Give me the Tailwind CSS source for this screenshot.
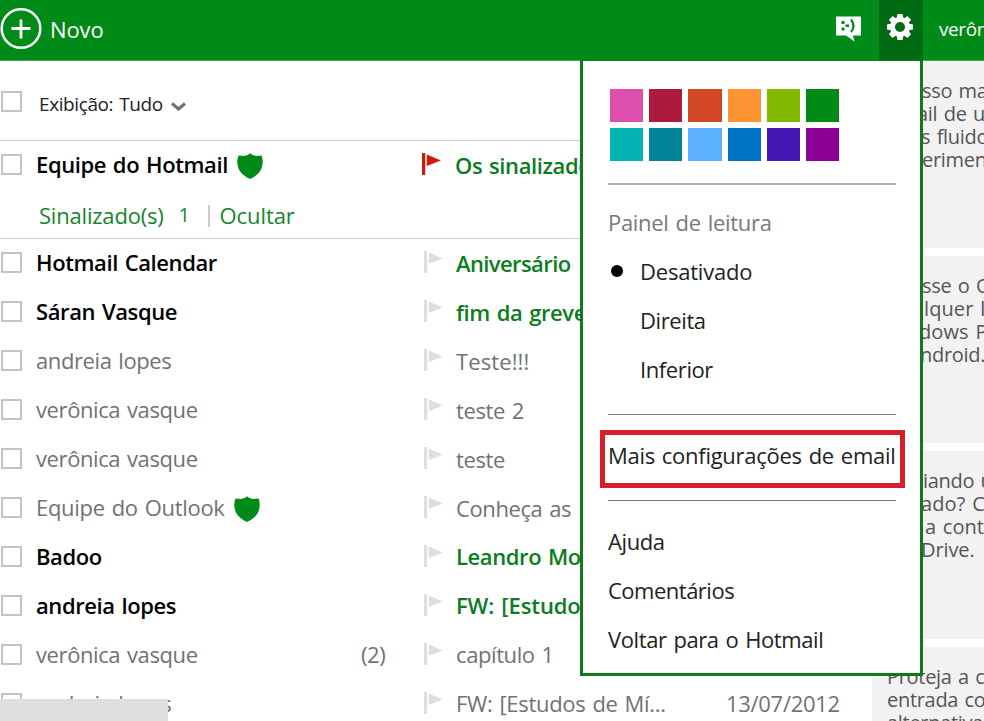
<!DOCTYPE html>
<html lang="pt-BR">
<head>
    <meta charset="UTF-8">
    <meta name="viewport" content="width=device-width, initial-scale=1.0">
    <title>Outlook</title>
    <script src="https://cdn.jsdelivr.net/npm/@tailwindcss/browser@4"></script>
</head>
<body class="bg-white font-['Open_Sans','Noto_Sans',sans-serif] text-[22px] leading-[30px] tracking-[-0.4px] [word-spacing:1.5px] text-[#707276] whitespace-nowrap">
    <!-- Icons -->
    <svg class="hidden">
        <symbol id="flag" viewBox="0 0 20 22">
            <path d="M0 0h3.200v22H0zM4.800 1.500L19 7.500 4.800 13z" fill="currentColor"/>
        </symbol>
        <symbol id="shield" viewBox="0 0 26 26">
            <path d="M13 0.300C15.500 2.500 18.500 3.300 21.300 2.800L24.500 2.500C26.500 7 26 13 23.500 17.500C21 21.500 17 24.300 13 26C9 24.300 5 21.500 2.500 17.500C0 13 -0.500 7 1.500 2.500L4.700 2.800C7.500 3.300 10.500 2.500 13 0.300Z" fill="currentColor"/>
        </symbol>
    </svg>

    <div class="relative h-[721px] w-[984px] overflow-hidden">
        <!-- Header -->
        <header class="flex h-[61px] items-center border-b border-[#43a550] bg-[#008a17] text-white">
            <svg class="mb-[2px] size-[42px]" viewBox="0 0 42 42" fill="none" stroke="currentColor">
                <circle cx="21" cy="20.500" r="19.300" stroke-width="2.500"/>
                <path d="M21 11.500v19M11.500 20.500h19" stroke-width="2.800"/>
            </svg>
            <span class="mb-[2px] ml-[8px] tracking-[-0.1px]">Novo</span>
            <svg class="mb-[3px] ml-auto h-[26px] w-[26px]" viewBox="0 0 26 26">
                <path d="M0 0.500h25v19h-8l1.500 6-8.500-6H0z" fill="white"/>
                <path d="M5.500 5h3v3h-3zM5.500 11.500h3v3h-3zM9.500 8.500h3.500v2.500H9.500z" fill="#008a17"/>
                <path d="M15 3.500q5 6.500 0 12.500" fill="none" stroke="#008a17" stroke-width="2.200"/>
            </svg>
            <div class="ml-[17px] flex h-[60px] w-[44px] items-center justify-center bg-[#006b12] pb-[6px] pr-[2px]">
                <svg class="size-[28px]" viewBox="-14 -14 28 28">
                    <circle r="7.500" fill="none" stroke="white" stroke-width="5"/>
                    <g fill="white">
                        <path id="tooth" d="M-3.400 -8L-2.600 -13h5.200L3.400 -8z"/>
                        <use href="#tooth" transform="rotate(45)"/>
                        <use href="#tooth" transform="rotate(90)"/>
                        <use href="#tooth" transform="rotate(135)"/>
                        <use href="#tooth" transform="rotate(180)"/>
                        <use href="#tooth" transform="rotate(225)"/>
                        <use href="#tooth" transform="rotate(270)"/>
                        <use href="#tooth" transform="rotate(315)"/>
                    </g>
                </svg>
            </div>
            <span class="mb-[2px] w-[61px] overflow-hidden pl-[16px] text-[19px]">verônica</span>
        </header>

        <main class="flex h-[660px]">
            <!-- Message list -->
            <section class="w-[872px] shrink-0">
                <div class="flex h-[80px] items-center border-b border-[#cccccc] text-[19px] text-[#222222]">
                    <span class="ml-px mt-[2px] size-[21px] border-2 border-[#c4c4c4]"></span>
                    <span class="ml-[17px] mt-[7px]">Exibição: Tudo</span>
                    <svg class="ml-[8px] mt-[12px] h-[10px] w-[15px]" viewBox="0 0 15 10" fill="none" stroke="#707070" stroke-width="3">
                        <path d="M1 1.500l6.500 5.500L14 1.500"/>
                    </svg>
                </div>

                <div class="h-[98px] border-b border-[#cccccc]">
                    <div class="flex h-[49px] items-center font-semibold">
                        <span class="ml-px mb-[3px] size-[21px] border-2 border-[#c4c4c4]"></span>
                        <span class="mb-[3px] ml-[14px] flex w-[386px] items-center text-black">Equipe do Hotmail<svg class="ml-[9px] mt-[4px] size-[26px] text-[#008a17]"><use href="#shield"/></svg></span>
                        <svg class="mb-[3px] h-[22px] w-[20px] text-[#d3180c]"><use href="#flag"/></svg>
                        <span class="mb-[2px] ml-[13px] text-[#0a7d1c]">Os sinalizados</span>
                    </div>
                    <div class="flex h-[49px] items-center pl-[39px] text-[#16852a]">
                        <span class="tracking-[-0.2px]">Sinalizado(s)</span>
                        <span class="ml-[15px] text-[20px]">1</span>
                        <span class="ml-[18px] mr-[10px] mt-[3px] h-[22px] w-[2px] bg-[#cccccc]"></span>
                        <span class="tracking-[-0.1px]">Ocultar</span>
                    </div>
                </div>

                <div class="flex h-[49px] items-center pb-[3px] font-semibold">
                    <span class="ml-px mt-px size-[21px] border-2 border-[#c4c4c4]"></span>
                    <span class="ml-[14px] w-[388px] text-black">Hotmail Calendar</span>
                    <svg class="h-[22px] w-[20px] text-[#dedede]"><use href="#flag"/></svg>
                    <span class="ml-[12px] mt-px tracking-[-0.6px] text-[#0a7d1c]">Aniversário</span>
                </div>
                <div class="flex h-[49px] items-center pb-[3px] font-semibold">
                    <span class="ml-px mt-px size-[21px] border-2 border-[#c4c4c4]"></span>
                    <span class="ml-[14px] w-[388px] text-black">Sáran Vasque</span>
                    <svg class="h-[22px] w-[20px] text-[#dedede]"><use href="#flag"/></svg>
                    <span class="ml-[12px] mt-px text-[#0a7d1c]">fim da greve</span>
                </div>
                <div class="flex h-[49px] items-center pb-[3px]">
                    <span class="ml-px mt-px size-[21px] border-2 border-[#c4c4c4]"></span>
                    <span class="ml-[14px] w-[388px]">andreia lopes</span>
                    <svg class="h-[22px] w-[20px] text-[#dedede]"><use href="#flag"/></svg>
                    <span class="ml-[12px] mt-px tracking-[0.1px]">Teste!!!</span>
                </div>
                <div class="flex h-[49px] items-center pb-[3px]">
                    <span class="ml-px mt-px size-[21px] border-2 border-[#c4c4c4]"></span>
                    <span class="ml-[14px] w-[388px]">verônica vasque</span>
                    <svg class="h-[22px] w-[20px] text-[#dedede]"><use href="#flag"/></svg>
                    <span class="ml-[12px] mt-px">teste 2</span>
                </div>
                <div class="flex h-[49px] items-center pb-[3px]">
                    <span class="ml-px mt-px size-[21px] border-2 border-[#c4c4c4]"></span>
                    <span class="ml-[14px] w-[388px]">verônica vasque</span>
                    <svg class="h-[22px] w-[20px] text-[#dedede]"><use href="#flag"/></svg>
                    <span class="ml-[12px] mt-px">teste</span>
                </div>
                <div class="flex h-[49px] items-center pb-[3px]">
                    <span class="ml-px mt-px size-[21px] border-2 border-[#c4c4c4]"></span>
                    <span class="ml-[14px] flex w-[388px] items-center tracking-[-0.3px]">Equipe do Outlook<svg class="ml-[9px] mt-[4px] size-[26px] text-[#008a17]"><use href="#shield"/></svg></span>
                    <svg class="h-[22px] w-[20px] text-[#dedede]"><use href="#flag"/></svg>
                    <span class="ml-[12px] mt-px">Conheça as</span>
                </div>
                <div class="flex h-[49px] items-center pb-[4px] font-semibold">
                    <span class="ml-px mt-px size-[21px] border-2 border-[#c4c4c4]"></span>
                    <span class="ml-[14px] w-[388px] text-black">Badoo</span>
                    <svg class="h-[22px] w-[20px] text-[#dedede]"><use href="#flag"/></svg>
                    <span class="ml-[12px] mt-px text-[#0a7d1c]">Leandro Mo</span>
                </div>
                <div class="flex h-[49px] items-center pb-[4px] font-semibold">
                    <span class="ml-px mt-px size-[21px] border-2 border-[#c4c4c4]"></span>
                    <span class="ml-[14px] w-[388px] text-black">andreia lopes</span>
                    <svg class="h-[22px] w-[20px] text-[#dedede]"><use href="#flag"/></svg>
                    <span class="ml-[12px] mt-px tracking-[-0.1px] text-[#0a7d1c]">FW: [Estudo</span>
                </div>
                <div class="flex h-[49px] items-center pb-[4px]">
                    <span class="ml-px mt-px size-[21px] border-2 border-[#c4c4c4]"></span>
                    <span class="ml-[14px] w-[325px]">verônica vasque</span>
                    <span class="w-[63px]">(2)</span>
                    <svg class="h-[22px] w-[20px] text-[#dedede]"><use href="#flag"/></svg>
                    <span class="ml-[12px] mt-px">capítulo 1</span>
                </div>
                <div class="flex h-[49px] items-center pb-[4px]">
                    <span class="ml-px mt-px size-[21px] border-2 border-[#c4c4c4]"></span>
                    <span class="ml-[14px] w-[388px]">andreia lopes</span>
                    <svg class="h-[22px] w-[20px] text-[#dedede]"><use href="#flag"/></svg>
                    <span class="ml-[12px] mt-px w-[270px] tracking-[-0.3px]">FW: [Estudos de Mí...</span>
                    <span class="tracking-[-0.3px]">13/07/2012</span>
                </div>
            </section>

            <!-- Side cards -->
            <aside class="flex w-[112px] flex-col gap-[8px] overflow-hidden text-[20px] leading-[23px] tracking-[-0.3px] text-[#555555]">
                <div class="h-[187px] shrink-0 bg-[#f2f2f2] pt-[18px]">
                    <p class="pl-[50px]">sso mais</p>
                    <p class="pl-[45px]">ail de um</p>
                    <p class="pl-[49px]">s fluido</p>
                    <p class="pl-[50px]">erimente</p>
                </div>
                <div class="h-[187px] shrink-0 bg-[#f2f2f2] pt-[18px]">
                    <p class="pl-[50px]">sse o Outlook</p>
                    <p class="pl-[52px] tracking-[0.1px]">lquer lugar</p>
                    <p class="pl-[47px] tracking-[0.1px]">dows Phone</p>
                    <p class="pl-[48px]">ndroid.</p>
                </div>
                <div class="h-[188px] shrink-0 bg-[#f2f2f2] pt-[18px]">
                    <p class="pl-[51px]">iando um</p>
                    <p class="pl-[49px] tracking-[0.1px]">ado? Com</p>
                    <p class="pl-[53px] tracking-[0px]">a conta</p>
                    <p class="pl-[49px] tracking-[-0.1px]">Drive.</p>
                </div>
                <div class="h-[188px] shrink-0 bg-[#f2f2f2] pl-[15px] pt-[18px]">
                    <p>Proteja a conta</p>
                    <p>entrada com</p>
                    <p>alternativas</p>
                </div>
            </aside>
        </main>

        <!-- Settings menu -->
        <div class="absolute left-[580px] top-[60px] h-[616px] w-[343px] border-3 border-t border-[#0d7a1c] bg-white pl-[25px] pt-[28px] text-[#222222]">
            <div class="ml-[2px] grid w-[229px] grid-cols-6 gap-x-[6px] gap-y-[6px]">
                <span class="h-[33px] bg-[#dd4fad]"></span>
                <span class="h-[33px] bg-[#ae193e]"></span>
                <span class="h-[33px] bg-[#d24726]"></span>
                <span class="h-[33px] bg-[#ff9434]"></span>
                <span class="h-[33px] bg-[#82ba00]"></span>
                <span class="h-[33px] bg-[#008a17]"></span>
                <span class="h-[33px] bg-[#03b3b2]"></span>
                <span class="h-[33px] bg-[#008299]"></span>
                <span class="h-[33px] bg-[#5db2ff]"></span>
                <span class="h-[33px] bg-[#0072c6]"></span>
                <span class="h-[33px] bg-[#4617b4]"></span>
                <span class="h-[33px] bg-[#8c0095]"></span>
            </div>
            <div class="mt-[22px] h-[2px] w-[288px] bg-[#b0b0b0]"></div>
            <div class="mt-[22px] tracking-[-0.3px] text-[#77797c]">Painel de leitura</div>
            <div class="mt-[19px] flex items-center">
                <span class="ml-[3px] mr-[17px] size-[12px] rounded-full bg-black"></span>
                <span class="tracking-[-0.2px]">Desativado</span>
            </div>
            <div class="mt-[19px] pl-[32px]">Direita</div>
            <div class="mt-[19px] pl-[32px]">Inferior</div>
            <div class="mt-[30px] h-px w-[288px] bg-[#777777]"></div>
            <div class="-ml-[8px] mt-[15px] h-[58px] w-[305px] border-5 border-[#d81e2a] pl-[3px] pt-[5px] tracking-[-0.28px]">Mais configurações de email</div>
            <div class="mt-[12px] h-px w-[288px] bg-[#777777]"></div>
            <div class="mt-[25px]">Ajuda</div>
            <div class="mt-[19px] tracking-[-0.5px]">Comentários</div>
            <div class="mt-[19px]">Voltar para o Hotmail</div>
        </div>

        <!-- Link status bar -->
        <div class="absolute bottom-0 left-0 h-[22px] w-[168px] bg-[#dedede]"></div>
    </div>
</body>
</html>
